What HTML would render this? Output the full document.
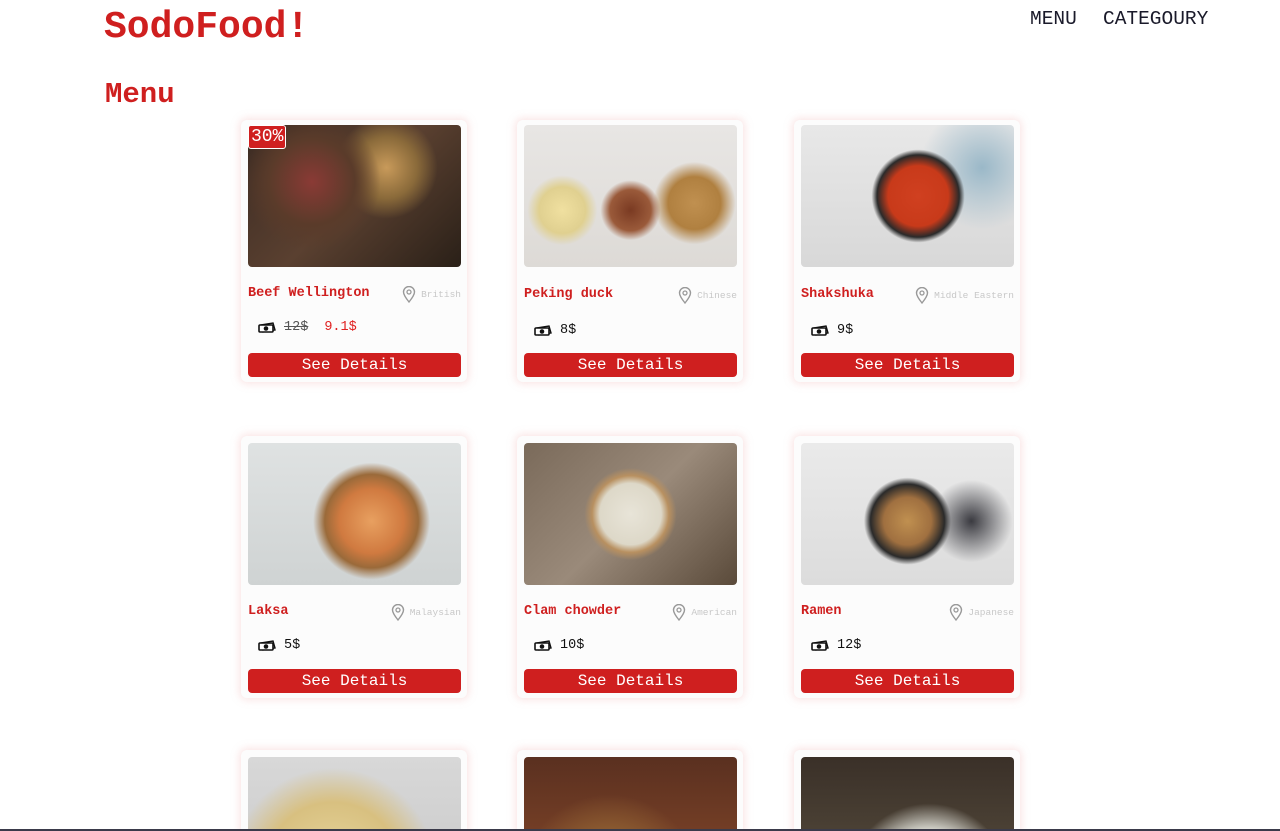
<!DOCTYPE html>
<html style="width:1280px;height:831px;overflow:hidden"><head><meta charset="utf-8"><style>
*{margin:0;padding:0;box-sizing:border-box}
body{width:1280px;height:831px;overflow:hidden;background:#fff;font-family:"Liberation Mono",monospace;position:relative}
.logo{position:absolute;left:104px;top:6px;font-size:38px;font-weight:bold;color:#cf1f1f}
.nav{position:absolute;top:8px;font-size:19.5px;color:#1a1a2a}
.h{position:absolute;left:105px;top:78px;font-size:29px;font-weight:bold;color:#cf1f1f}
.card{position:absolute;width:226px;height:262px;background:#fcfcfc;border-radius:6px;box-shadow:0 0 8px 2px rgba(240,180,180,.35);overflow:hidden}
.img{position:absolute;left:7px;top:5px;width:213px;height:142px;border-radius:4px}
.name{position:absolute;left:7px;top:165px;font-size:13.5px;font-weight:bold;color:#cf1f1f}
.loc{position:absolute;right:6px;top:165px;font-size:9.5px;color:#c8c8c8;display:flex;align-items:center;gap:5px}
.price{position:absolute;left:17px;top:200px;font-size:13.5px;color:#111;display:flex;align-items:center;gap:8px}
.btn{position:absolute;left:7px;top:233px;width:213px;height:24px;background:#cf1f1f;border-radius:4px;color:#fff;font-size:16px;text-align:center;line-height:24px}
.badge{position:absolute;left:7px;top:5px;background:#cf1f1f;color:#fff;font-size:18px;padding:0 2px;border-radius:3px;line-height:22px;border:1px solid #fff}
.bar{position:absolute;left:0;top:829px;width:1280px;height:2px;background:#3a3a4a}
</style></head><body>
<div class="logo">SodoFood!</div>
<div class="nav" style="left:1030px">MENU</div>
<div class="nav" style="left:1103px">CATEGOURY</div>
<div class="h">Menu</div>

<div class="card" style="left:241px;top:120px">
 <div class="img" style="background:radial-gradient(circle at 30% 40%,#8a3a35 0,#5a3b2a 25%,transparent 40%),radial-gradient(circle at 65% 30%,#c89a5a 0,#8a6a3a 18%,transparent 30%),linear-gradient(135deg,#3a2a22,#5a4030 50%,#2a2018)"></div>
 <div class="badge">30%</div>
 <div class="name" style="top:166px">Beef Wellington</div>
 <div class="loc" style="top:166px"><svg width="14" height="17" viewBox="0 0 14 17"><path d="M7 16C3 11 1.5 8.5 1.5 6a5.5 5.5 0 0 1 11 0C12.5 8.5 11 11 7 16z" fill="none" stroke="#999" stroke-width="1.4"/><circle cx="7" cy="6" r="2" fill="none" stroke="#999" stroke-width="1.3"/></svg>British</div>
 <div class="price" style="top:200px"><svg width="18" height="12" viewBox="0 0 18 12"><path d="M3 3L15 1L17 8L5 10z" fill="none" stroke="#111" stroke-width="1.4"/><rect x="1" y="3" width="14" height="7" rx="1" fill="#fff" stroke="#111" stroke-width="1.6"/><circle cx="8" cy="6.5" r="2.3" fill="#111"/></svg><span style="color:#555;text-decoration:line-through">12$</span><span style="color:#e02020;margin-left:8px">9.1$</span></div>
 <div class="btn">See Details</div>
</div>
<div class="card" style="left:517px;top:120px">
 <div class="img" style="background:radial-gradient(circle at 50% 60%,#7a3a22 0,#9a5a3a 15%,transparent 22%),radial-gradient(circle at 80% 55%,#c09050 0,#b08040 14%,transparent 22%),radial-gradient(circle at 18% 60%,#f0e0a0 0,#e0d090 12%,transparent 18%),linear-gradient(#e8e6e4,#dddad6)"></div>
 <div class="name" style="top:167px">Peking duck</div>
 <div class="loc" style="top:167px"><svg width="14" height="17" viewBox="0 0 14 17"><path d="M7 16C3 11 1.5 8.5 1.5 6a5.5 5.5 0 0 1 11 0C12.5 8.5 11 11 7 16z" fill="none" stroke="#999" stroke-width="1.4"/><circle cx="7" cy="6" r="2" fill="none" stroke="#999" stroke-width="1.3"/></svg>Chinese</div>
 <div class="price" style="top:203px"><svg width="18" height="12" viewBox="0 0 18 12"><path d="M3 3L15 1L17 8L5 10z" fill="none" stroke="#111" stroke-width="1.4"/><rect x="1" y="3" width="14" height="7" rx="1" fill="#fff" stroke="#111" stroke-width="1.6"/><circle cx="8" cy="6.5" r="2.3" fill="#111"/></svg>8$</div>
 <div class="btn">See Details</div>
</div>
<div class="card" style="left:794px;top:120px">
 <div class="img" style="background:radial-gradient(circle at 55% 50%,#d04020 0,#c83a1a 22%,#2a2a2a 30%,transparent 34%),radial-gradient(circle at 85% 30%,#9ab8c8 0,transparent 30%),linear-gradient(#e8e8e8,#d8d8d8)"></div>
 <div class="name" style="top:167px">Shakshuka</div>
 <div class="loc" style="top:167px"><svg width="14" height="17" viewBox="0 0 14 17"><path d="M7 16C3 11 1.5 8.5 1.5 6a5.5 5.5 0 0 1 11 0C12.5 8.5 11 11 7 16z" fill="none" stroke="#999" stroke-width="1.4"/><circle cx="7" cy="6" r="2" fill="none" stroke="#999" stroke-width="1.3"/></svg>Middle Eastern</div>
 <div class="price" style="top:203px"><svg width="18" height="12" viewBox="0 0 18 12"><path d="M3 3L15 1L17 8L5 10z" fill="none" stroke="#111" stroke-width="1.4"/><rect x="1" y="3" width="14" height="7" rx="1" fill="#fff" stroke="#111" stroke-width="1.6"/><circle cx="8" cy="6.5" r="2.3" fill="#111"/></svg>9$</div>
 <div class="btn">See Details</div>
</div>

<div class="card" style="left:241px;top:436px">
 <div class="img" style="top:7px;background:radial-gradient(circle at 58% 55%,#e8a060 0,#d07a40 22%,#9a6a3a 32%,transparent 40%),linear-gradient(#dfe2e2,#cfd3d3)"></div>
 <div class="name" style="top:168px">Laksa</div>
 <div class="loc" style="top:168px"><svg width="14" height="17" viewBox="0 0 14 17"><path d="M7 16C3 11 1.5 8.5 1.5 6a5.5 5.5 0 0 1 11 0C12.5 8.5 11 11 7 16z" fill="none" stroke="#999" stroke-width="1.4"/><circle cx="7" cy="6" r="2" fill="none" stroke="#999" stroke-width="1.3"/></svg>Malaysian</div>
 <div class="price" style="top:202px"><svg width="18" height="12" viewBox="0 0 18 12"><path d="M3 3L15 1L17 8L5 10z" fill="none" stroke="#111" stroke-width="1.4"/><rect x="1" y="3" width="14" height="7" rx="1" fill="#fff" stroke="#111" stroke-width="1.6"/><circle cx="8" cy="6.5" r="2.3" fill="#111"/></svg>5$</div>
 <div class="btn">See Details</div>
</div>
<div class="card" style="left:517px;top:436px">
 <div class="img" style="top:7px;background:radial-gradient(circle at 50% 50%,#e8e4d8 0,#ddd8c8 24%,#b89060 30%,transparent 36%),linear-gradient(135deg,#7a6a5a,#9a8a7a 50%,#5a4a3a)"></div>
 <div class="name" style="top:168px">Clam chowder</div>
 <div class="loc" style="top:168px"><svg width="14" height="17" viewBox="0 0 14 17"><path d="M7 16C3 11 1.5 8.5 1.5 6a5.5 5.5 0 0 1 11 0C12.5 8.5 11 11 7 16z" fill="none" stroke="#999" stroke-width="1.4"/><circle cx="7" cy="6" r="2" fill="none" stroke="#999" stroke-width="1.3"/></svg>American</div>
 <div class="price" style="top:202px"><svg width="18" height="12" viewBox="0 0 18 12"><path d="M3 3L15 1L17 8L5 10z" fill="none" stroke="#111" stroke-width="1.4"/><rect x="1" y="3" width="14" height="7" rx="1" fill="#fff" stroke="#111" stroke-width="1.6"/><circle cx="8" cy="6.5" r="2.3" fill="#111"/></svg>10$</div>
 <div class="btn">See Details</div>
</div>
<div class="card" style="left:794px;top:436px">
 <div class="img" style="top:7px;background:radial-gradient(circle at 50% 55%,#c09050 0,#a07040 18%,#2a2a2a 28%,transparent 33%),radial-gradient(circle at 80% 55%,#3a3a40 0,transparent 22%),linear-gradient(#eaeaea,#dcdcdc)"></div>
 <div class="name" style="top:168px">Ramen</div>
 <div class="loc" style="top:168px"><svg width="14" height="17" viewBox="0 0 14 17"><path d="M7 16C3 11 1.5 8.5 1.5 6a5.5 5.5 0 0 1 11 0C12.5 8.5 11 11 7 16z" fill="none" stroke="#999" stroke-width="1.4"/><circle cx="7" cy="6" r="2" fill="none" stroke="#999" stroke-width="1.3"/></svg>Japanese</div>
 <div class="price" style="top:202px"><svg width="18" height="12" viewBox="0 0 18 12"><path d="M3 3L15 1L17 8L5 10z" fill="none" stroke="#111" stroke-width="1.4"/><rect x="1" y="3" width="14" height="7" rx="1" fill="#fff" stroke="#111" stroke-width="1.6"/><circle cx="8" cy="6.5" r="2.3" fill="#111"/></svg>12$</div>
 <div class="btn">See Details</div>
</div>

<div class="card" style="left:241px;top:750px;height:81px;border-radius:6px 6px 0 0">
 <div class="img" style="top:7px;background:radial-gradient(circle at 40% 80%,#e8d8a0 0,#d8c080 40%,transparent 60%),linear-gradient(#d8d8d8,#c8c8c8)"></div>
</div>
<div class="card" style="left:517px;top:750px;height:81px;border-radius:6px 6px 0 0">
 <div class="img" style="top:7px;background:radial-gradient(circle at 40% 90%,#6a3a20 0,#8a5a30 30%,transparent 50%),linear-gradient(#5a3020,#8a4a2a)"></div>
</div>
<div class="card" style="left:794px;top:750px;height:81px;border-radius:6px 6px 0 0">
 <div class="img" style="top:7px;background:radial-gradient(circle at 60% 90%,#e8e8e0 0,#d8d8d0 30%,transparent 45%),linear-gradient(#3a3028,#5a5040)"></div>
</div>
<div class="bar"></div>
</body></html>
